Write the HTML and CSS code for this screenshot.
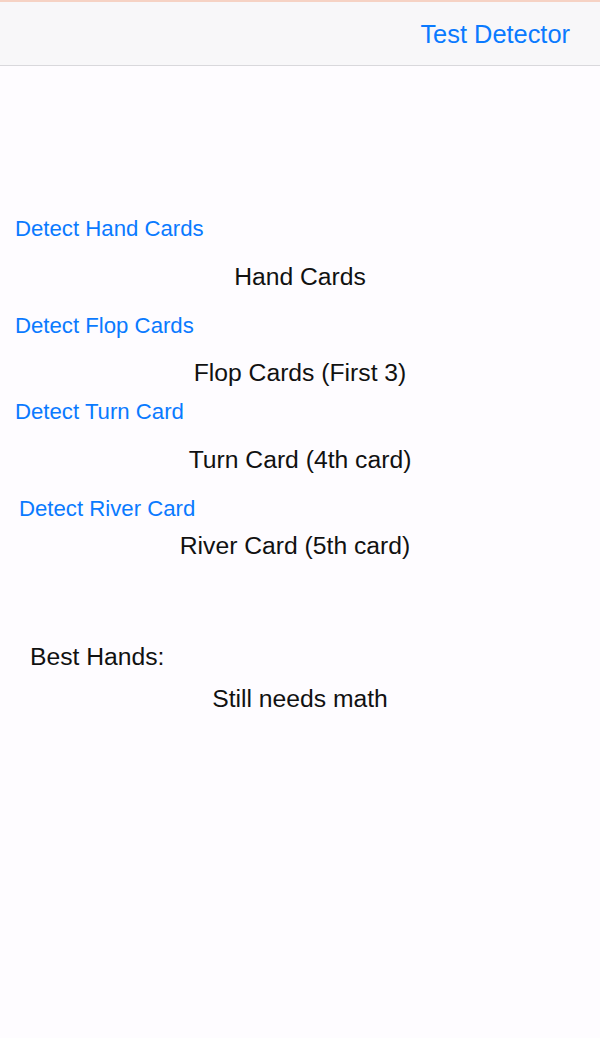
FILE: index.html
```html
<!DOCTYPE html>
<html>
<head>
<meta charset="utf-8">
<link rel="stylesheet" href="styles.css">
</head>
<body>
<div class="screen">
  <header class="navbar">
    <span class="nav-button">Test Detector</span>
  </header>
  <main class="content">
    <div class="row link r1">Detect Hand Cards</div>
    <div class="row label r2">Hand Cards</div>
    <div class="row link r3">Detect Flop Cards</div>
    <div class="row label r4">Flop Cards (First 3)</div>
    <div class="row link r5">Detect Turn Card</div>
    <div class="row label r6">Turn Card (4th card)</div>
    <div class="row link river r7">Detect River Card</div>
    <div class="row label river-label r8">River Card (5th card)</div>
    <div class="row title r9">Best Hands:</div>
    <div class="row label r10">Still needs math</div>
  </main>
</div>
</body>
</html>
```
FILE: styles.css
```css
html, body {
  margin: 0;
  padding: 0;
}
body {
  width: 600px;
  height: 1038px;
  background: #fefcff;
  font-family: "Liberation Sans", Arial, sans-serif;
  overflow: hidden;
}
.screen {
  display: flex;
  flex-direction: column;
}
.navbar {
  height: 63px;
  border-top: 2px solid #f6d2c4;
  border-bottom: 1px solid #d9d8dc;
  background: #f8f7f9;
  display: flex;
  justify-content: flex-end;
  align-items: center;
  padding-right: 30px;
}
.nav-button {
  color: #0a7aff;
  font-size: 25.4px;
  margin-top: 1px;
}
.content {
  display: flex;
  flex-direction: column;
  padding-top: 148px;
}
.row {
  height: 30px;
  line-height: 30px;
  white-space: nowrap;
}
.link {
  color: #0a7aff;
  font-size: 22.2px;
  padding-left: 15px;
}
.link.river {
  padding-left: 19px;
}
.label {
  color: #111;
  font-size: 24.7px;
  text-align: center;
}
.label.river-label {
  padding-right: 10px;
}
.title {
  color: #111;
  font-size: 24.7px;
  padding-left: 30px;
}
.r2 { margin-top: 18px; }
.r3 { margin-top: 19px; }
.r4 { margin-top: 17px; }
.r5 { margin-top: 9px; }
.r6 { margin-top: 18px; }
.r7 { margin-top: 19px; }
.r8 { margin-top: 7px; }
.r9 { margin-top: 81px; }
.r10 { margin-top: 12px; }
```
